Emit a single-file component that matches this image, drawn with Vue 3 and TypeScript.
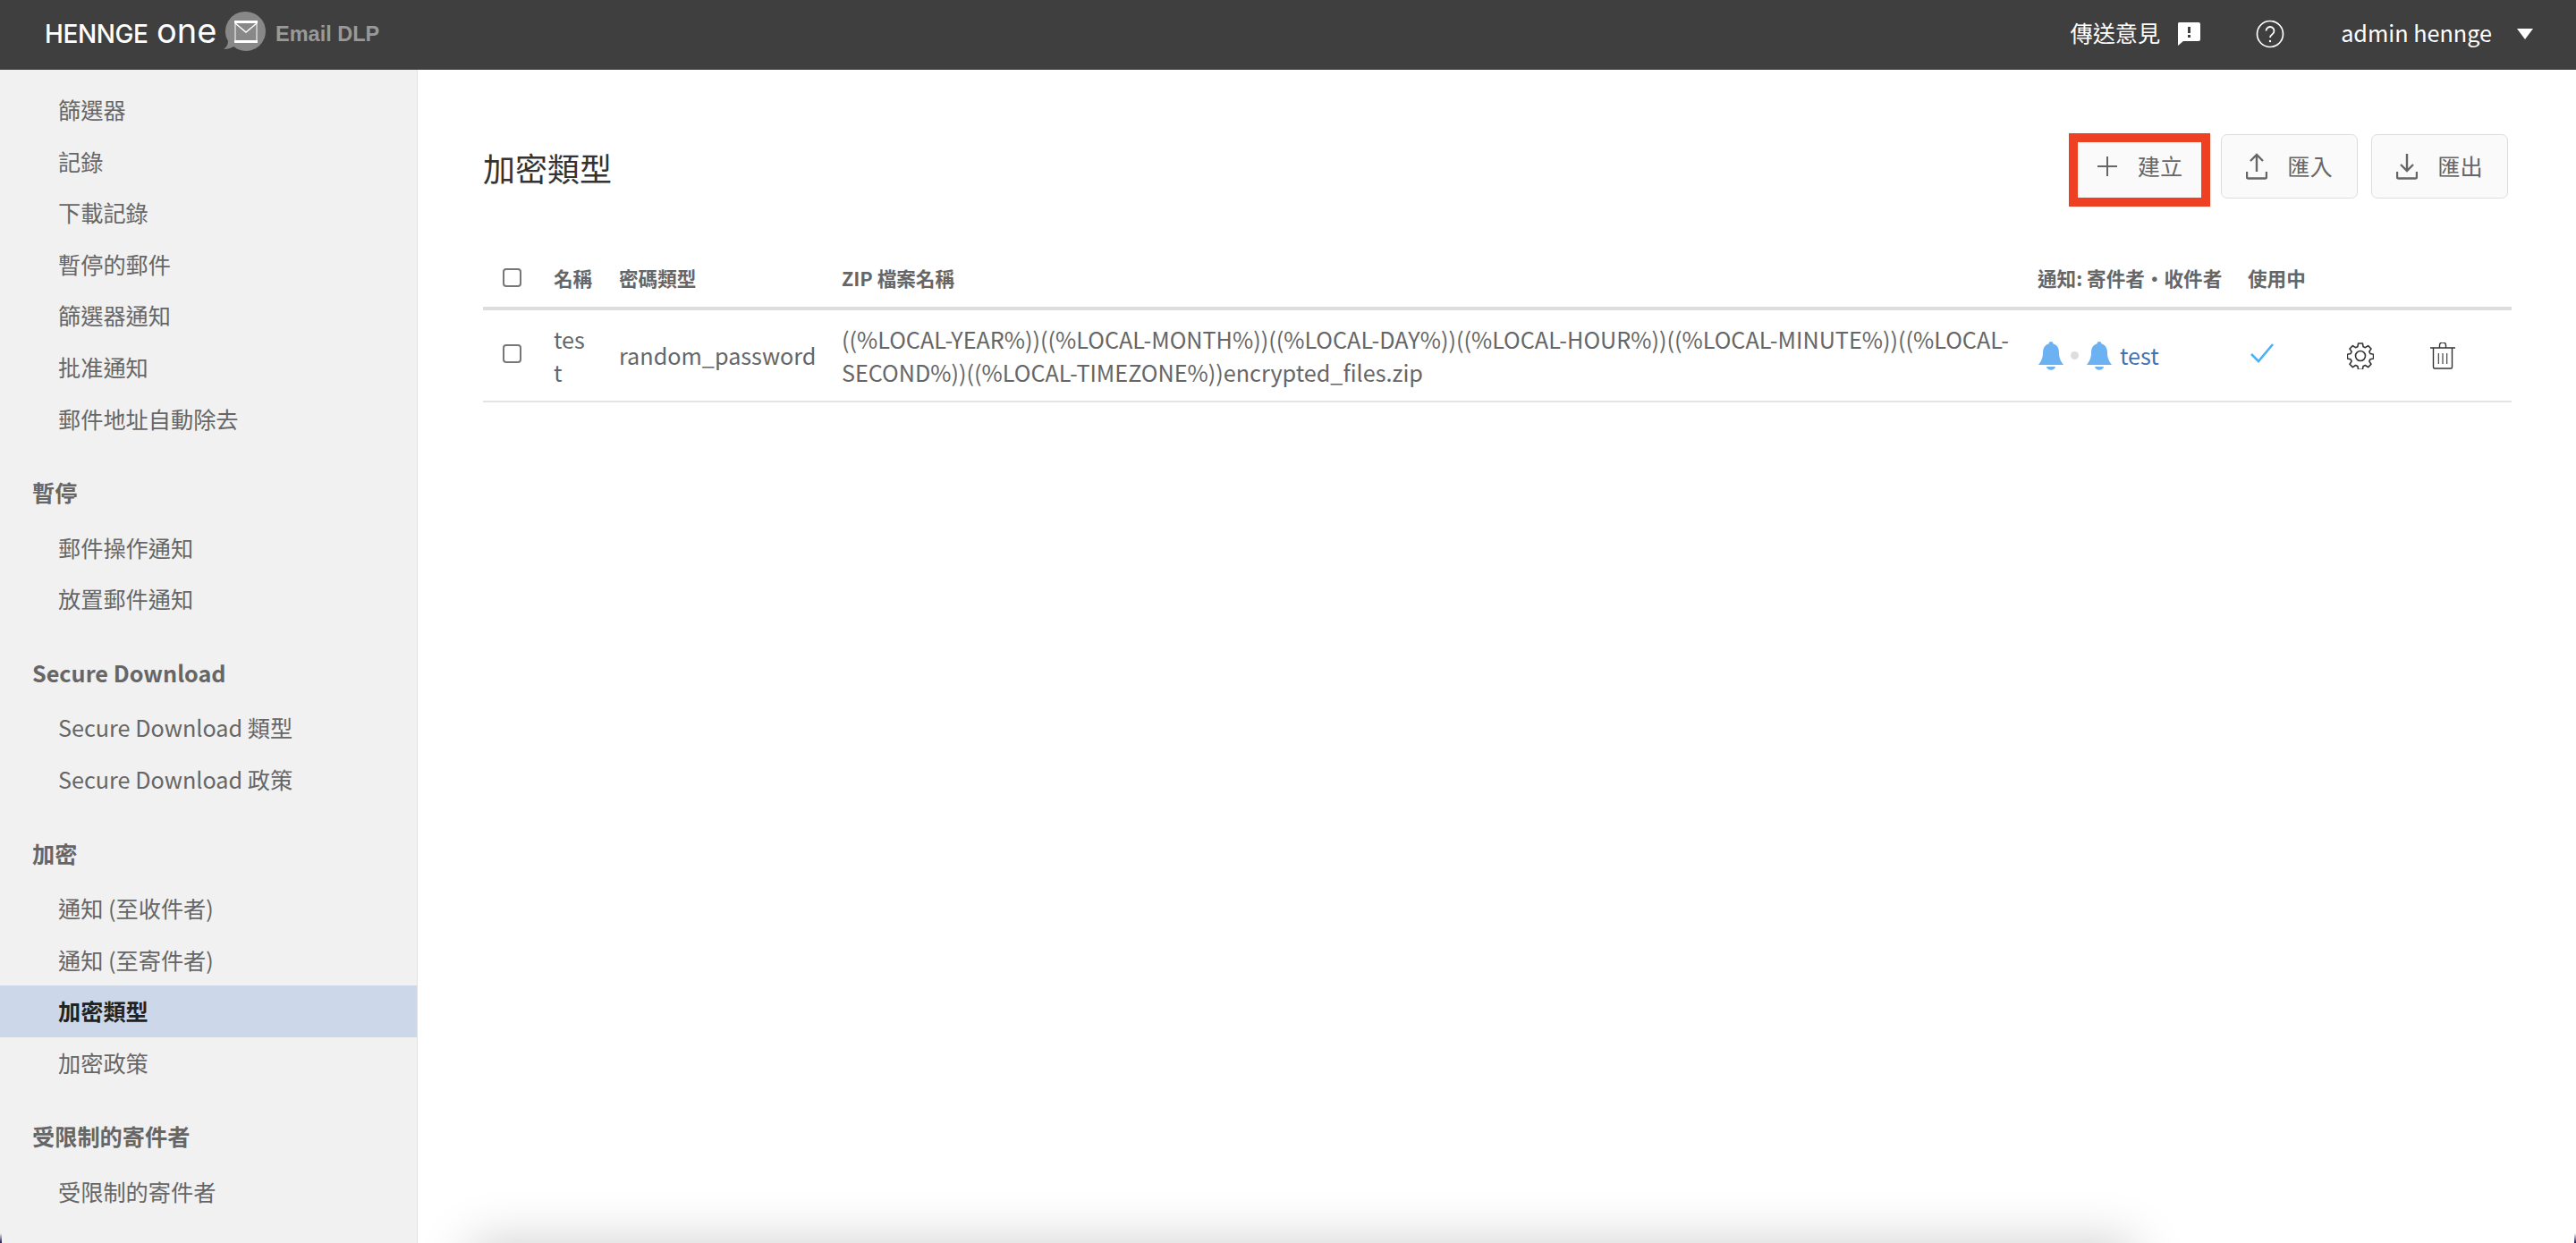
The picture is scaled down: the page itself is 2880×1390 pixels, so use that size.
<script setup lang="ts">
interface Group { title?: string; items: string[]; active?: string }
const groups: Group[] = [
  { items: ['篩選器', '記錄', '下載記錄', '暫停的郵件', '篩選器通知', '批准通知', '郵件地址自動除去'] },
  { title: '暫停', items: ['郵件操作通知', '放置郵件通知'] },
  { title: 'Secure Download', items: ['Secure Download 類型', 'Secure Download 政策'] },
  { title: '加密', items: ['通知 (至收件者)', '通知 (至寄件者)', '加密類型', '加密政策'], active: '加密類型' },
  { title: '受限制的寄件者', items: ['受限制的寄件者'] },
]
</script>

<template>
  <div class="page">
    <header class="topbar">
      <div class="brand">
        <span class="logo-a">HENNGE</span>
        <span class="logo-b">one</span>
        <svg class="logo-mail" width="48" height="46" viewBox="0 0 48 46">
          <path d="M26 1a22 22 0 1 1-14 39c-3 2-7 3-11 3 3-2 5-5 5-9A22 22 0 0 1 26 1z" fill="#888" />
          <path d="M13 11h26v3H13zM13 33h26v3H13z" fill="#fff" />
          <path d="M14 14v19M38 14v19" stroke="#fff" stroke-width="1" fill="none" />
          <path d="M14 14l12 10 12-10" stroke="#fff" stroke-width="1.4" fill="none" />
        </svg>
        <span class="product">Email DLP</span>
      </div>
      <div class="top-actions">
        <span class="top-text">傳送意見</span>
        <svg class="fb" width="28" height="28" viewBox="0 0 28 28">
          <path d="M3 1h22a2 2 0 0 1 2 2v17a2 2 0 0 1-2 2H8l-6 5V3a2 2 0 0 1 1-2z" fill="#fff" />
          <path d="M13 6h3v7h-3zM13 15h3v3h-3z" fill="#3f3f3f" />
        </svg>
        <svg class="help" width="32" height="32" viewBox="0 0 32 32" fill="none" stroke="#fff">
          <circle cx="16" cy="16" r="14.5" stroke-width="1.7" />
          <path d="M11.5 12.500a4.500 4.500 0 1 1 6.800 3.900c-1.500.9-2.300 1.700-2.300 3.600" stroke-width="1.800" />
          <circle cx="16" cy="24" r="1.200" fill="#fff" stroke="none" />
        </svg>
        <span class="top-text user">admin hennge</span>
        <svg class="caret" width="18" height="12" viewBox="0 0 18 12"><path d="M0 0h18L9 12z" fill="#fff" /></svg>
      </div>
    </header>

    <div class="body">
      <aside class="sidebar">
        <section v-for="(g, i) in groups" :key="i" class="group">
          <h3 v-if="g.title" class="group-title">{{ g.title }}</h3>
          <a v-for="it in g.items" :key="it" class="item" :class="{ active: it === g.active }">{{ it }}</a>
        </section>
      </aside>

      <main class="main">
        <div class="title-row">
          <h1 class="title">加密類型</h1>
          <div class="buttons">
            <button class="btn highlighted">
              <svg width="24" height="24" viewBox="0 0 24 24" fill="none" stroke="#666" stroke-width="2"><path d="M12 1v22M1 12h22" /></svg>
              <span>建立</span>
            </button>
            <button class="btn">
              <svg width="24" height="30" viewBox="0 0 24 30" fill="none" stroke="#666" stroke-width="2.400"><path d="M12 21V2M5 9l7-7 7 7M1 21v6a1.500 1.500 0 0 0 1.500 1.500h19A1.500 1.500 0 0 0 23 27v-6" /></svg>
              <span>匯入</span>
            </button>
            <button class="btn">
              <svg width="24" height="30" viewBox="0 0 24 30" fill="none" stroke="#666" stroke-width="2.400"><path d="M12 1v19M5 13l7 7 7-7M1 21v6a1.500 1.500 0 0 0 1.500 1.500h19A1.500 1.500 0 0 0 23 27v-6" /></svg>
              <span>匯出</span>
            </button>
          </div>
        </div>

        <table class="table">
          <colgroup>
            <col class="c-check" /><col class="c-name" /><col class="c-pass" /><col class="c-zip" />
            <col class="c-notify" /><col class="c-active" /><col class="c-gear" /><col class="c-trash" />
          </colgroup>
          <thead>
            <tr>
              <th class="check-cell"><input type="checkbox" class="cb" /></th>
              <th>名稱</th>
              <th>密碼類型</th>
              <th>ZIP 檔案名稱</th>
              <th>通知: 寄件者・收件者</th>
              <th>使用中</th>
              <th></th>
              <th></th>
            </tr>
          </thead>
          <tbody>
            <tr>
              <td class="check-cell"><input type="checkbox" class="cb" /></td>
              <td class="name-cell">test</td>
              <td>random_password</td>
              <td>((%LOCAL-YEAR%))((%LOCAL-MONTH%))((%LOCAL-DAY%))((%LOCAL-HOUR%))((%LOCAL-MINUTE%))((%LOCAL-SECOND%))((%LOCAL-TIMEZONE%))encrypted_files.zip</td>
              <td>
                <div class="notify">
                  <svg width="28" height="32" viewBox="0 0 28 32"><path d="M14 0c1.500 0 2.500 1 2.500 2.500 5 1.200 6.500 5.500 6.500 10 0 6 2 9.500 5 13.500H0c3-4 5-7.500 5-13.500 0-4.500 1.500-8.800 6.500-10C11.500 1 12.500 0 14 0z" fill="#6cb2f2" /><path d="M9 28h10c-.5 2.500-2.500 3.800-5 3.800S9.500 30.500 9 28z" fill="#6cb2f2" /></svg>
                  <i class="dot"></i>
                  <svg width="28" height="32" viewBox="0 0 28 32"><path d="M14 0c1.500 0 2.500 1 2.500 2.500 5 1.200 6.500 5.500 6.500 10 0 6 2 9.500 5 13.500H0c3-4 5-7.500 5-13.500 0-4.500 1.500-8.800 6.500-10C11.500 1 12.500 0 14 0z" fill="#6cb2f2" /><path d="M9 28h10c-.5 2.500-2.500 3.800-5 3.800S9.500 30.500 9 28z" fill="#6cb2f2" /></svg>
                  <a class="link">test</a>
                </div>
              </td>
              <td>
                <svg class="icon-check" width="26" height="22" viewBox="0 0 26 22" fill="none" stroke="#4cb0f4" stroke-width="2.600"><path d="M1 12l8 8L25 1" /></svg>
              </td>
              <td>
                <svg class="icon-gear" width="30" height="30" viewBox="0 0 30 30" fill="none" stroke="#333" stroke-width="1.600">
                  <path d="M12.600 1h4.800l.7 3.700 2.400 1 3.100-2.100 3.400 3.400-2.100 3.100 1 2.400 3.700.7v4.800l-3.700.7-1 2.400 2.100 3.100-3.400 3.400-3.100-2.100-2.400 1-.7 3.700h-4.800l-.7-3.700-2.400-1-3.100 2.100-3.400-3.400 2.100-3.100-1-2.400-3.700-.7v-4.800l3.700-.7 1-2.400-2.100-3.100 3.400-3.400 3.100 2.100 2.400-1z" stroke-linejoin="round" />
                  <circle cx="15" cy="15" r="5.500" />
                </svg>
              </td>
              <td>
                <svg class="icon-trash" width="28" height="30" viewBox="0 0 28 30" fill="none" stroke="#333" stroke-width="1.400">
                  <path d="M0 6h28M3.500 6v21.500a1.500 1.500 0 0 0 1.500 1.500h18a1.500 1.500 0 0 0 1.500-1.500V6M10.500 6V3a3.500 3 0 0 1 7 0v3" />
                  <path d="M9.300 12v12M14 12v12M18.700 12v12" stroke-width="1.100" />
                </svg>
              </td>
            </tr>
          </tbody>
        </table>
      </main>
    </div>
    <div class="peek"></div>
    <i class="corner corner-l"></i>
    <i class="corner corner-r"></i>
  </div>
</template>

<style>
html, body { margin: 0; height: 100%; overflow: hidden; background: #fff; }
</style>

<style scoped>
.page {
  position: relative;
  width: 2880px;
  height: 1390px;
  overflow: hidden;
  display: flex;
  flex-direction: column;
  font-family: "Noto Sans CJK TC", "Noto Sans", sans-serif;
  color: #666;
}
.topbar {
  height: 78px;
  flex: none;
  box-sizing: border-box;
  background: #3f3f3f;
  display: flex;
  align-items: center;
  justify-content: space-between;
  padding: 0 48px 2px 50px;
}
.brand { display: flex; align-items: center; }
.logo-a {
  display: block;
  width: 118px;
  white-space: nowrap;
  font-family: Inter, "Liberation Sans", sans-serif;
  font-size: 28px;
  font-weight: 500;
  letter-spacing: -0.4px;
  color: #fff;
}
.logo-b {
  display: block;
  width: 68px;
  margin-left: 7px;
  white-space: nowrap;
  font-family: Inter, "Liberation Sans", sans-serif;
  font-size: 38px;
  font-weight: 400;
  line-height: 1;
  margin-top: -8px;
  letter-spacing: 0;
  color: #fff;
}
.logo-mail { margin-left: 6px; margin-bottom: 6px; flex: none; }
.product {
  font-family: "Liberation Sans", Arial, sans-serif;
  font-weight: 700;
  font-size: 23.5px;
  color: #999;
  margin-left: 11px;
}
.top-actions { display: flex; align-items: center; }
.top-text { font-size: 25.2px; color: #fff; line-height: 1; margin-top: -3px; }
.fb { margin-left: 18px; margin-top: -1px; }
.help { margin-left: 61px; }
.user { margin-left: 63px; }
.caret { margin-left: 28px; }

.body { flex: 1; display: flex; min-height: 0; }
.sidebar {
  width: 466px;
  flex: none;
  background: #f1f1f1;
  border-right: 1px solid #e2e2e2;
  padding-top: 16px;
}
.group + .group { margin-top: 24px; }
.group-title {
  margin: 0 0 4.5px;
  height: 58px;
  line-height: 58px;
  padding-left: 36px;
  font-size: 25.2px;
  font-weight: 700;
  color: #666;
}
.item {
  display: block;
  height: 57.6px;
  line-height: 57.6px;
  padding-left: 65px;
  font-size: 25.2px;
  color: #666;
}
.item.active { background: #ccd8ea; color: #222; font-weight: 700; }

.main { flex: 1; padding: 0 72px 0 73px; min-width: 0; }
.title-row {
  height: 203px;
  display: flex;
  align-items: flex-start;
  justify-content: space-between;
}
.title {
  margin: 91px 0 0;
  font-size: 36px;
  font-weight: 400;
  line-height: 1;
  color: #333;
}
.buttons { display: flex; align-items: flex-start; margin-top: 72px; margin-right: 4px; gap: 15px; }
.btn {
  width: 153px;
  height: 72px;
  box-sizing: border-box;
  display: flex;
  align-items: center;
  justify-content: center;
  gap: 22px;
  background: #fafafa;
  border: 1px solid #ddd;
  border-radius: 7px;
  font-family: inherit;
  font-size: 25.2px;
  color: #666;
  padding: 0;
}
.btn span { margin-top: -3px; }
.btn.highlighted {
  width: 158px;
  height: 82px;
  margin-top: -1px;
  margin-right: -3px;
  padding-bottom: 8px;
  border: 10px solid #ee4023;
  border-radius: 0;
}

.table { width: 2268px; border-collapse: collapse; table-layout: fixed; }
.c-check { width: 65px; }
.c-name { width: 73px; }
.c-pass { width: 249px; }
.c-zip { width: 1337px; }
.c-notify { width: 235px; }
.c-active { width: 111px; }
.c-gear { width: 93px; }
.c-trash { width: 105px; }
th, td { padding: 0 14px; text-align: left; }
th {
  padding-bottom: 3px;
  font-size: 21.6px;
  font-weight: 700;
  color: #666;
  line-height: 32px;
  white-space: nowrap;
}
thead tr { height: 64px; border-bottom: 4px solid #ddd; }
tbody tr { height: 104px; border-bottom: 2px solid #e4e4e4; }
td { font-size: 25.2px; line-height: 37px; color: #666; vertical-align: middle; overflow-wrap: anywhere; }
th.check-cell, td.check-cell { padding: 0 0 4px 22px; }
td.name-cell { padding-right: 17px; }
.cb {
  appearance: none;
  display: block;
  margin: 0;
  width: 21px;
  height: 21px;
  box-sizing: border-box;
  border: 2px solid #777;
  border-radius: 4px;
  background: #fff;
}
.notify { display: flex; align-items: center; margin-left: 1px; }
.notify svg { flex: none; }
.dot { width: 9px; height: 9px; border-radius: 50%; background: #ddd; margin: 0 9px 0 8px; }
.link { color: #3f74b0; margin-left: 9px; }
td svg { display: block; }
.icon-check { margin-left: 3px; margin-top: -6px; }
.peek {
  position: absolute;
  left: 526px;
  width: 1860px;
  top: 1440px;
  height: 200px;
  box-shadow: 0 -50px 55px rgba(0, 0, 0, 0.2);
}
.corner {
  position: absolute;
  bottom: 0;
  width: 2px;
  height: 11px;
  background: linear-gradient(to bottom, rgba(40, 20, 90, 0), #28145a);
}
.corner-l { left: 0; }
.corner-r { right: 0; }
</style>
